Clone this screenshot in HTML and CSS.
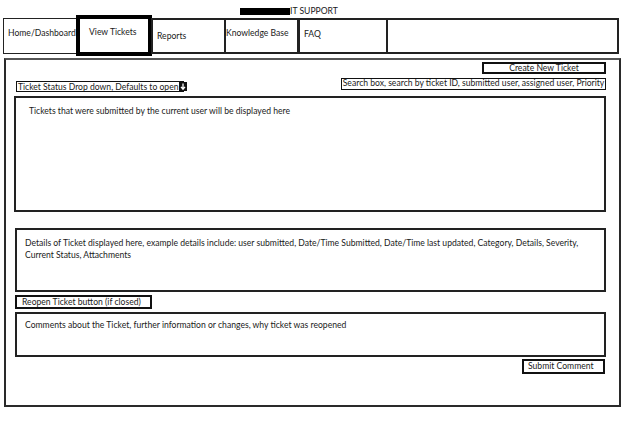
FILE: index.html
```html
<!DOCTYPE html>
<html>
<head>
<meta charset="utf-8">
<link rel="stylesheet" href="styles.css">
</head>
<body>
<div class="page">
  <div class="header">
    <span class="redact"></span><span class="title">IT SUPPORT</span>
  </div>
  <nav class="nav">
    <div class="tab tab-home">Home/Dashboard</div>
    <div class="tab tab-view">View Tickets</div>
    <div class="tab tab-reports">Reports</div>
    <div class="tab tab-kb">Knowledge Base</div>
    <div class="tab tab-faq">FAQ</div>
    <div class="tab tab-empty"></div>
  </nav>
  <main class="main">
    <div class="row-create">
      <div class="btn btn-create">Create New Ticket</div>
    </div>
    <div class="row-filter">
      <div class="dropdown">Ticket Status Drop down, Defaults to open<span class="dd-icon"><svg width="8" height="9" viewBox="0 0 8 9"><rect x="0" y="0" width="8" height="9" fill="#111"/><path d="M4 1.5 V6.5 M2 4.8 L4 7.2 L6 4.8" stroke="#fff" stroke-width="1.3" fill="none"/></svg></span></div>
      <div class="search">Search box, search by ticket ID, submitted user, assigned user, Priority</div>
    </div>
    <div class="box box-list">Tickets that were submitted by the current user will be displayed here</div>
    <div class="box box-details">Details of Ticket displayed here, example details include: user submitted, Date/Time Submitted, Date/Time last updated, Category, Details, Severity, Current Status, Attachments</div>
    <div class="btn btn-reopen">Reopen Ticket button (if closed)</div>
    <div class="box box-comments">Comments about the Ticket, further information or changes, why ticket was reopened</div>
    <div class="row-submit">
      <div class="btn btn-submit">Submit Comment</div>
    </div>
  </main>
</div>
</body>
</html>
```
FILE: styles.css
```css
* { box-sizing: border-box; }
html, body { margin: 0; padding: 0; background: #fff; }
body {
  font-family: Lato, "Open Sans", "Liberation Sans", sans-serif;
  font-size: 8.6px;
  color: #1a1a1a;
  width: 624px;
  height: 428px;
  overflow: hidden;
}
.page { padding-top: 6px; }
.header {
  display: flex;
  align-items: center;
  margin-left: 240px;
  height: 11px;
}
.redact {
  display: inline-block;
  width: 50px;
  height: 7px;
  background: #000;
}
.title { line-height: 11px; }

.nav {
  display: flex;
  margin-left: 3px;
  width: 616px;
  height: 37px;
  align-items: flex-start;
}
.tab {
  border: 2px solid #222;
  background: #fff;
  line-height: 11px;
  white-space: nowrap;
}
.tab-home { width: 74px; border-width: 1.5px; padding: 9px 0 0 4px; margin-top: 1px; height: 36px; }
.tab-view { width: 76px; border: 4px solid #000; padding: 8px 0 0 9px; margin-top: -2px; height: 41px; margin-left: -1px; }
.tab-reports { width: 75px; padding: 11px 0 0 4px; margin-left: -1px; margin-top: 1px; height: 36px; }
.tab-kb { width: 75px; padding: 8px 0 0 0; margin-left: -2px; margin-top: 1px; height: 36px; }
.tab-faq { width: 90px; padding: 9px 0 0 4px; margin-left: -1px; margin-top: 1px; height: 36px; }
.tab-empty { flex: 1; margin-left: -2px; margin-top: 1px; height: 36px; }

.main {
  margin: 4px 0 0 4px;
  width: 617px;
  height: 349px;
  border: 2px solid #2a2a2a;
  border-top-color: #555;
  padding: 2px 13px 0 8px;
  display: flex;
  flex-direction: column;
}
.btn {
  border: 2px solid #111;
  background: #fff;
  line-height: 10px;
  white-space: nowrap;
}
.row-create { display: flex; justify-content: flex-end; }
.btn-create { width: 124px; height: 12px; text-align: center; line-height: 9px; }

.row-filter {
  display: flex;
  justify-content: space-between;
  align-items: flex-start;
  margin-top: 4px;
  height: 18px;
}
.dropdown {
  margin-top: 3px;
  margin-left: 2px;
  width: 168px;
  height: 11px;
  border: 1.5px solid #111;
  padding-left: 1px;
  display: flex;
  align-items: center;
  white-space: nowrap;
}
.dd-icon { display: inline-flex; margin-left: 1px; }
.search {
  width: 265px;
  height: 12px;
  border: 1.5px solid #111;
  line-height: 9px;
  text-align: center;
  white-space: nowrap;
}
.box {
  border: 2px solid #222;
  background: #fff;
}
.box-list {
  height: 116px;
  padding: 8px 0 0 13px;
  line-height: 11px;
}
.box-details {
  margin-top: 16px;
  margin-left: 1px;
  height: 64px;
  padding: 7px 18px 0 8px;
  line-height: 12px;
}
.btn-reopen {
  margin-top: 3px;
  margin-left: 1px;
  width: 137px;
  height: 14px;
  padding-left: 5px;
  line-height: 11px;
}
.box-comments {
  margin-top: 3px;
  margin-left: 1px;
  height: 45px;
  padding: 6px 0 0 8px;
  line-height: 11px;
}
.row-submit { display: flex; justify-content: flex-end; margin-top: 2px; }
.btn-submit { width: 83px; height: 15px; padding-left: 4px; line-height: 11px; margin-right: 1px; }
```
